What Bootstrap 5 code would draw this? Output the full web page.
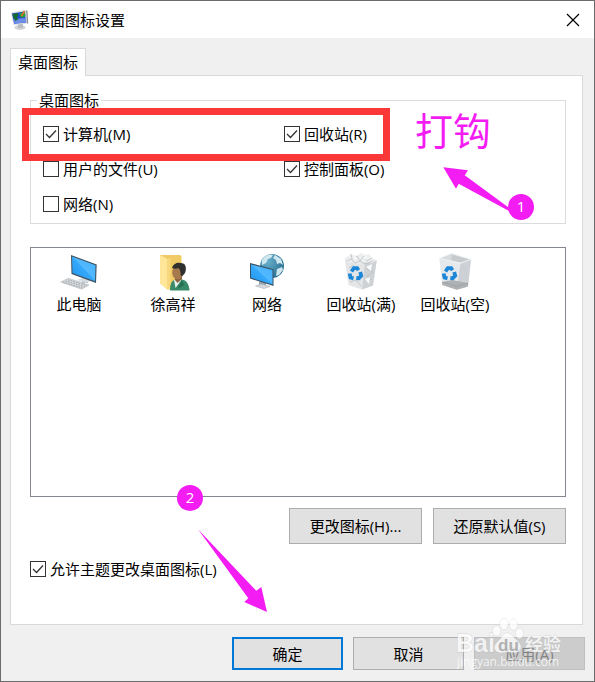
<!DOCTYPE html>
<html lang="zh-CN">
<head>
<meta charset="utf-8">
<meta name="viewport" content="width=device-width, initial-scale=1">
<title>桌面图标设置</title>
<link href="https://cdn.jsdelivr.net/npm/bootstrap@5.3.0/dist/css/bootstrap.min.css" rel="stylesheet">
<style>
  body { font: 15px/20px "Open Sans", "Noto Sans CJK SC", sans-serif; color: #000; }
  .dialog { min-height: 100vh; background: #f0f0f0; border: 1px solid #6b6b6b; }
  .titlebar { height: 37px; padding: 0 11px 0 9px; }
  .title-text { margin-left: 5px; }
  .close-x { width: 20px; height: 20px; }
  .dialog-main { padding: 10px 11px 12px 9px; }
  .tab-head { height: 28px; padding: 0 7px 2px; border: 1px solid #d9d9d9; border-bottom: 0; margin-bottom: -1px; z-index: 1; line-height: 24px; font-size: 15px; }
  .tab-head:focus-visible { outline: 1px dotted #000; }
  .panel { border: 1px solid #d9d9d9; padding: 14px 16px 45px 19px; }
  .group { border: 1px solid #dcdcdc; padding: 0 10px 9px 12px; }
  .group legend { float: none; width: auto; margin: 0 0 0 -6px; padding: 0 2px; font-size: 15px; line-height: 20px; }
  .options { display: grid; grid-template-columns: 8fr 9fr; row-gap: 15px; padding-top: 14px; }
  .tick { display: flex; align-items: center; gap: 4px; }
  .tick input { appearance: none; width: 16px; height: 16px; margin: 0; border: 1px solid #333; background: #fff; flex: none; }
  .tick input:checked { background: #fff url("data:image/svg+xml,%3Csvg xmlns='http://www.w3.org/2000/svg' viewBox='0 0 14 14'%3E%3Cpath d='M2 7l3.5 3.5L12 3.500' fill='none' stroke='%23333' stroke-width='1.3'/%3E%3C/svg%3E") center / 14px no-repeat; }
  .icon-box { border: 1px solid #828790; margin-top: 23px; padding: 5px 1px; }
  .icon-cell { width: 94px; gap: 3px; }
  .icon-cell svg { width: 38px; height: 38px; }
  .win-btn { background: #e1e1e1; border: 1px solid #adadad; color: #000; padding: 0; font-size: 15px; line-height: 20px; }
  .wide { width: 133px; height: 36px; }
  .foot { width: 111px; height: 33px; }
  .main-btn { border: 2px solid #0078d7; }
  .win-btn:disabled { background: #ccc; border-color: #bfbfbf; color: #838383; }
  .actions { gap: 11px; margin: 11px 0 15px; }
  .footer-row { gap: 10px; padding: 0 9px 11px; }
  .note { position: absolute; pointer-events: none; }
  .red-frame { left: -9px; top: -2px; width: 368px; height: 53px; border: 7px solid #fb3838; }
  .pink-word { left: 384px; top: -2px; font-size: 38px; line-height: 44px; color: #f31cf3; }
  .dot { width: 26px; height: 26px; border-radius: 50%; background: #f31cf3; color: #fff; text-align: center; line-height: 24px; }
  .dot-one { left: 477px; top: 84px; }
  .arrow-one { left: 412px; top: 56px; }
  .dot-two { left: 166px; top: 409px; }
  .arrow-two { left: 186px; top: 452px; }
  .stamp { right: 23px; bottom: 8px; }
</style>
<script src="https://cdn.jsdelivr.net/npm/bootstrap@5.3.0/dist/js/bootstrap.bundle.min.js"></script>
</head>
<body>
<div class="dialog d-flex flex-column position-relative">
  <header class="titlebar d-flex align-items-center bg-white">
    <svg width="20" height="22" viewBox="0 0 20 22" aria-hidden="true">
      <ellipse cx="10" cy="18.500" rx="5.500" ry="2.500" fill="#d2d4d6"/><path d="M8 14l5 1v4H8z" fill="#b9bcc0"/>
      <path d="M1 3.500L15.500 1l2.200 13.500L3.500 16z" fill="#d8dadf"/><path d="M16 1l1.500 1 .7 12-1 1z" fill="#85898f"/>
      <path d="M2 4.500l12.500-2 1.700 11-12 1.200z" fill="#2346d2"/><path d="M4 10l12-1 .3 4.500-12 1z" fill="#6f8eea"/>
      <path d="M2.500 5l5-1 1 3-2 1 2 2-3 2-2-3z" fill="#126b32"/><path d="M10 4l5-1 .5 4-3 2-3-2z" fill="#24a53a"/><path d="M14.500 2l-3 5" stroke="#e66a2c" stroke-width="1.500"/>
    </svg>
    <span class="title-text">桌面图标设置</span>
    <button class="close-x ms-auto bg-transparent border-0 p-0 d-flex align-items-center justify-content-center" type="button" aria-label="关闭">
      <svg width="14" height="14" viewBox="0 0 14 14"><path d="M1 1l12 12M13 1L1 13" stroke="#000" stroke-width="1.200"/></svg>
    </button>
  </header>

  <main class="dialog-main d-flex flex-column flex-grow-1">
    <div class="d-flex" role="tablist">
      <button class="tab-head bg-white position-relative" type="button" role="tab" aria-selected="true" id="tab-icons" aria-controls="panel-icons">桌面图标</button>
    </div>
    <section class="panel bg-white d-flex flex-column flex-grow-1 position-relative" role="tabpanel" id="panel-icons" aria-labelledby="tab-icons">
      <fieldset class="group position-relative">
        <legend>桌面图标</legend>
        <div class="options">
          <label class="tick"><input type="checkbox" checked>计算机(M)</label>
          <label class="tick"><input type="checkbox" checked>回收站(R)</label>
          <label class="tick"><input type="checkbox">用户的文件(U)</label>
          <label class="tick"><input type="checkbox" checked>控制面板(O)</label>
          <label class="tick"><input type="checkbox">网络(N)</label>
        </div>
        <div class="note red-frame"></div>
        <span class="note pink-word text-nowrap">打钩</span>
        <svg class="note arrow-one" width="68" height="46" viewBox="443 166 68 46" aria-hidden="true"><path d="M443.300 167.300L468 170.300 464.700 175.300 508.300 207.300 509 211 458.700 183.700 456 188.700z" fill="#f31cf3"/></svg>
        <span class="note dot dot-one">1</span>
      </fieldset>

      <div class="icon-box flex-grow-1">
        <div class="d-flex flex-wrap text-center">
          <div class="icon-cell d-flex flex-column align-items-center">
            <svg viewBox="0 -1 38 38" aria-hidden="true">
              <defs>
                <linearGradient id="screen" x1="0" y1="1" x2="1" y2="0"><stop offset="0" stop-color="#1e93ee"/><stop offset=".5" stop-color="#36a9fb"/><stop offset=".52" stop-color="#52b9ff"/><stop offset="1" stop-color="#42b0ff"/></linearGradient>
              </defs>
              <path d="M22 23l6 2v4h-6z" fill="#a9b4bd"/><path d="M17 26l7-2.500 8 2.500-6 3z" fill="#d5dce1"/>
              <path d="M11 1l25.700 9.500L36 29 11.500 20z" fill="#3e5260"/><path d="M12 2.500l23.500 8.800-.5 16-22.500-8.200z" fill="url(#screen)"/>
              <path d="M.7 28l7.600-3.700L29 31l-7.300 4.200z" fill="#d8dcdf" stroke="#b1b7bb" stroke-width=".6"/>
              <path d="M3 28.200L22.500 34M5.500 27l19.300 5.700M8 25.800l19 5.700" stroke="#9aa1a6" stroke-width=".9" stroke-dasharray="1.800 .9"/>
            </svg>
            <span>此电脑</span>
          </div>
          <div class="icon-cell d-flex flex-column align-items-center">
            <svg viewBox="0 -1 38 38" aria-hidden="true">
              <path d="M6 1h20l1.500 1v30L13 35 6 29z" fill="#f0cb65"/><path d="M6 1l7.500 4v31L6 29.500z" fill="#ffe699"/><path d="M13.500 5l3-1v31l-3 1z" fill="#f7d87e"/>
              <path d="M16 36.500c0-6 1.500-9.500 5-11h7c5 1 7 5 7.500 11z" fill="#388a69"/><path d="M20 26l1.500 8 6-8z" fill="#e9f0ed"/><path d="M27.500 26l-4 9 7-4z" fill="#287054"/>
              <path d="M21 20h7v5l-4.500 4-2.500-3z" fill="#8c6442"/><ellipse cx="23.500" cy="18.500" rx="5.300" ry="6.800" fill="#a7794f"/>
              <path d="M18 14c1-4 5-6 8.500-5 5.500 0 6.500 5 4.500 10l-3 3.500-1.500-2c.5-2-.5-4.500-2-6.500-2 1-4.500.8-6.500 0z" fill="#30302e"/>
            </svg>
            <span>徐高祥</span>
          </div>
          <div class="icon-cell d-flex flex-column align-items-center">
            <svg viewBox="0 -1 38 38" aria-hidden="true">
              <defs><radialGradient id="sea" cx=".3" cy=".3" r=".8"><stop offset="0" stop-color="#6ab1cd"/><stop offset="1" stop-color="#286d8f"/></radialGradient></defs>
              <circle cx="24" cy="12" r="12" fill="url(#sea)"/>
              <path d="M14 6c3-5 7-6 11-5l-2 3-3 1-2 4-4 2zM27 1l6 4 2 6-3-2-3 1-1-4-3-2zM29 15l5-2 1 3-4 5-3 1z" fill="#cfe7ee"/>
              <path d="M11 27l7 2v3h-7z" fill="#9aa6ae"/><path d="M7.500 32l6-2 8.500 2.500-6 2z" fill="#d4dadd" stroke="#9ca5ab" stroke-width=".5"/>
              <path d="M2 9l23.500 6.200V32L2 24.500z" fill="#385163"/><path d="M3 10.500L24.500 16v14.500L3 23.700z" fill="url(#screen)"/>
            </svg>
            <span>网络</span>
          </div>
          <div class="icon-cell d-flex flex-column align-items-center">
            <svg viewBox="0 -1 38 38" aria-hidden="true">
              <defs>
                <g id="recycle" fill="none" stroke="#1c87d8" stroke-width="3.800"><path d="M9.500 17.500l2.300-3.300h3.400l1.300 2"/><path d="M18.200 18l1 3.800-2.400 2.500-2.500-.3"/><path d="M11.500 24.300l-3-.8-.8-4"/></g>
              </defs>
              <path d="M2.700 4l32 2.500L31 31.500 20 35.500 6.500 31z" fill="#e3e5e7"/><path d="M23 9l11.700-2.500L31 31.500 20 35.500z" fill="#cfd2d5"/>
              <path d="M3 4l6-4 5 2 5-3 4 2 4-1 3 4 5 2-5 3-8-1-5 2-6-2-5 1z" fill="#eceeef"/>
              <path d="M9 0l1 5 5-3 3 5 4-5 3 5 5-3M5 7l4-2 4 4 5-2 5 3 8-3M7 14l5-3M23 14l8 4-6 4 5 4M8 28l6-2 5 6" fill="none" stroke="#bcc0c3" stroke-width=".8"/>
              <path d="M10 4l4-2 1 4zM21 3l4-1v4zM24 13l6-3-1 7zM23 25l5-2-1 7z" fill="#f9fafa"/>
              <use href="#recycle"/>
            </svg>
            <span>回收站(满)</span>
          </div>
          <div class="icon-cell d-flex flex-column align-items-center">
            <svg viewBox="0 -1 38 38" aria-hidden="true">
              <path d="M3.300 4.300L15.700-.7 35 5.300 32 32.500 20.700 35.700 6.300 31z" fill="#e6e9eb"/><path d="M24.500 9.300L35 5.300 32 32.500 20.700 35.700z" fill="#cdd1d5"/>
              <path d="M4.500 4.500L15.700.2 33.500 5.500 24.500 8.500z" fill="#c6cacd"/><path d="M15.700.2l-.2 6.200-11-1.900z" fill="#d8dbde"/>
              <path d="M6 28l10-2 16 3v3.500l-11.300 3.200L6.300 31z" fill="#aeb2b5"/><path d="M6 28l15 4.500 11-3.500" fill="none" stroke="#93989b" stroke-width=".6"/>
              <path d="M3.300 4.300L15.700-.7 35 5.300 24.500 9.300z" fill="none" stroke="#f1f3f4" stroke-width=".9"/>
              <use href="#recycle"/>
            </svg>
            <span>回收站(空)</span>
          </div>
        </div>
      </div>

      <div class="actions d-flex justify-content-end">
        <button class="win-btn wide" type="button">更改图标(H)...</button>
        <button class="win-btn wide" type="button">还原默认值(S)</button>
      </div>
      <label class="tick align-self-start"><input type="checkbox" checked>允许主题更改桌面图标(L)</label>

      <span class="note dot dot-two">2</span>
      <svg class="note arrow-two" width="72" height="86" viewBox="198 528 72 86" aria-hidden="true"><path d="M199 529.300L257.300 590.700 262.300 587 268 612 245.300 602 249.300 598.300z" fill="#f31cf3"/></svg>
    </section>
  </main>

  <footer class="footer-row d-flex justify-content-end">
    <button class="win-btn foot main-btn" type="button">确定</button>
    <button class="win-btn foot" type="button">取消</button>
    <button class="win-btn foot" type="button" disabled>应用(A)</button>
  </footer>

  <svg class="note stamp" width="116" height="56" viewBox="455 617 116 56" aria-hidden="true">
    <g fill="#fff" fill-opacity=".75" stroke="#999" stroke-opacity=".3" stroke-width=".8" paint-order="stroke">
      <text x="456" y="652" font-family="Liberation Sans, sans-serif" font-weight="700" font-size="25">Bai</text>
      <ellipse cx="496.500" cy="631" rx="4" ry="5"/><ellipse cx="504" cy="624" rx="4" ry="5.500"/><ellipse cx="513.500" cy="624.500" rx="4" ry="5.500"/><ellipse cx="519.500" cy="633.500" rx="4" ry="5"/>
      <path d="M507.500 633c4 0 5 4 9 7s5 6 4 9-4 4-7 3.500c-4-.8-7-.8-11 0s-8-1-8-5 4-6 6-9 3-5.500 7-5.500z"/>
      <text x="525" y="651" font-family="Noto Sans CJK SC, sans-serif" font-weight="700" font-size="18">经验</text>
      <text x="457" y="666" font-family="Open Sans, sans-serif" font-size="12" stroke="none">jingyan.baidu.com</text>
    </g>
    <text x="498" y="651" font-family="Liberation Sans, sans-serif" font-weight="700" font-size="17" fill="#b0b0b0">du</text>
  </svg>
</div>
</body>
</html>
